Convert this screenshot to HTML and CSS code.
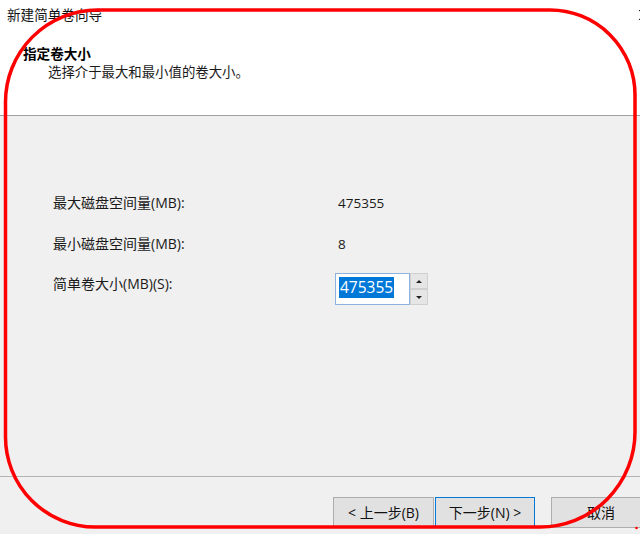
FILE: index.html
```html
<!DOCTYPE html>
<html lang="zh-CN">
<head>
<meta charset="utf-8">
<title>新建简单卷向导</title>
<link rel="stylesheet" href="styles.css">
</head>
<body>
<div class="window">
  <div class="header">
    <div class="titlebar">
      <span class="title">新建简单卷向导</span>
      <svg class="close" width="10" height="12" viewBox="0 0 10 12"><path d="M1 1 L10 11 M10 1 L1 11" stroke="#111" stroke-width="1" fill="none"/></svg>
    </div>
    <div class="heading">指定卷大小</div>
    <div class="subtitle">选择介于最大和最小值的卷大小。</div>
  </div>
  <div class="content">
    <div class="row r1">
      <div class="label">最大磁盘空间量(MB):</div>
      <div class="value">475355</div>
    </div>
    <div class="row r2">
      <div class="label">最小磁盘空间量(MB):</div>
      <div class="value">8</div>
    </div>
    <div class="row r3">
      <div class="label l3">简单卷大小(MB)(S):</div>
      <div class="spin">
        <div class="spin-input"><span class="sel">475355</span></div>
        <div class="spin-btns">
          <div class="spin-btn"><span class="tri-up"></span></div>
          <div class="spin-btn"><span class="tri-down"></span></div>
        </div>
      </div>
    </div>
  </div>
  <div class="footer">
    <div class="btn">&lt; 上一步(B)</div>
    <div class="btn default">下一步(N) &gt;</div>
    <div class="btn cancel">取消</div>
  </div>
</div>
<svg class="mark" width="640" height="534" viewBox="0 0 640 534">
  <path d="M5.5 102 A92 92 0 0 1 97 10 L550 10 A85 85 0 0 1 635 95 L635 432 A95 95 0 0 1 540 527 L95 527 A90 90 0 0 1 5.5 437 Z" fill="none" stroke="#ff0000" stroke-width="3.5"/>
  <circle cx="636.5" cy="528" r="1.3" fill="#ff0000"/>
</svg>
</body>
</html>
```
FILE: styles.css
```css
html, body {
  margin: 0;
  padding: 0;
}
body {
  width: 640px;
  height: 534px;
  overflow: hidden;
  position: relative;
  background: #f0f0f0;
  color: #000;
  font-family: "Open Sans", "Noto Sans CJK SC", sans-serif;
}
.window {
  width: 640px;
}
.header {
  background: #fff;
  height: 115px;
  border-bottom: 1px solid #a0a0a0;
}
.titlebar {
  height: 30px;
  line-height: 30px;
  padding-left: 7px;
  display: flex;
  justify-content: space-between;
  align-items: center;
  font-size: 13.6px;
  color: #111;
  overflow: hidden;
}
.close {
  margin-right: -6px;
  margin-top: -1px;
  flex-shrink: 0;
  position: relative;
  left: 2px;
}
.heading {
  margin: 14px 0 0 23px;
  font-weight: bold;
  font-size: 13.6px;
  line-height: 19px;
}
.subtitle {
  margin-left: 48px;
  font-size: 13.4px;
  line-height: 19px;
  color: #1a1a1a;
}
.content {
  box-sizing: border-box;
  height: 361px;
  padding: 77px 0 0 53px;
  border-bottom: 1px solid #b4b4b4;
}
.row {
  display: flex;
  align-items: flex-start;
}
.r1 { height: 41px; }
.r2 { height: 39px; }
.label {
  width: 282px;
  font-size: 14px;
  line-height: 20px;
  color: #1a1a1a;
}
.l3 {
  margin-top: 1px;
}
.value {
  padding-left: 3px;
  font-size: 13.5px;
  line-height: 20px;
  color: #1a1a1a;
}
.spin {
  display: flex;
  height: 32px;
}
.spin-input {
  box-sizing: border-box;
  width: 75px;
  height: 32px;
  background: #fff;
  border: 1px solid #8db2dd;
  padding: 2px 0 0 3px;
}
.sel {
  display: inline-block;
  background: #0078d7;
  color: #fff;
  font-size: 15.5px;
  line-height: 21px;
  padding: 0 1px 0 1px;
}
.spin-btns {
  display: flex;
  flex-direction: column;
  width: 18px;
}
.spin-btn {
  box-sizing: border-box;
  height: 16px;
  background: #e6e6e6;
  border: 1px solid #d0d0d0;
  display: flex;
  align-items: center;
  justify-content: center;
}
.tri-up {
  width: 0;
  height: 0;
  border-left: 3px solid transparent;
  border-right: 3px solid transparent;
  border-bottom: 3px solid #222;
}
.tri-down {
  width: 0;
  height: 0;
  border-left: 3px solid transparent;
  border-right: 3px solid transparent;
  border-top: 3px solid #222;
}
.footer {
  display: flex;
  padding: 20px 0 0 333px;
}
.btn {
  box-sizing: border-box;
  width: 101px;
  height: 31px;
  background: #e1e1e1;
  border: 1px solid #adadad;
  font-size: 14px;
  line-height: 29px;
  text-align: center;
  color: #111;
  flex-shrink: 0;
}
.default {
  width: 100px;
  margin-left: 1px;
  border-color: #0078d7;
}
.cancel {
  width: 100px;
  margin-left: 16px;
}
.mark {
  position: absolute;
  left: 0;
  top: 0;
  pointer-events: none;
}
```
